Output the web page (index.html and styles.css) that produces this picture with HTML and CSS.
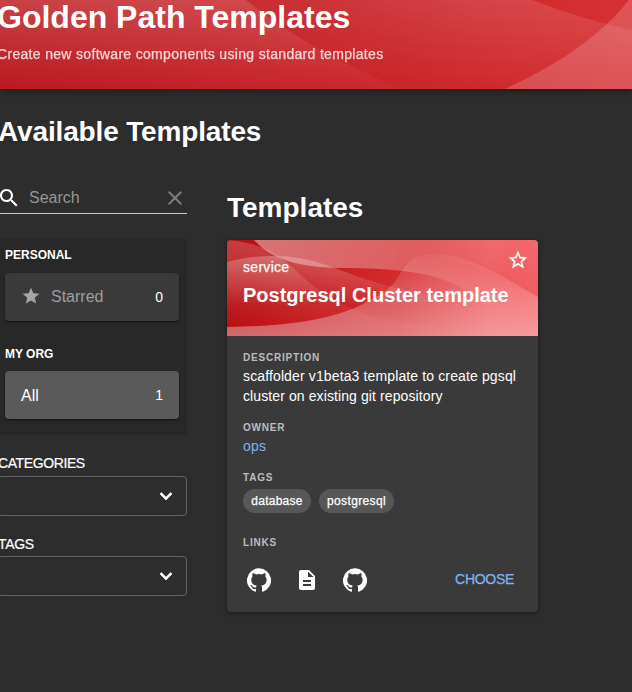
FILE: index.html
```html
<!DOCTYPE html>
<html lang="en">
<head>
<meta charset="utf-8">
<title>Golden Path Templates</title>
<link rel="stylesheet" href="styles.css">
</head>
<body>
<header class="hero">
  <svg class="art" viewBox="0 0 632 89" preserveAspectRatio="none" aria-hidden="true">
    <defs>
      <linearGradient id="h1" x1="0" y1="0" x2="0" y2="1"><stop offset="0" stop-color="#fff" stop-opacity=".19"/><stop offset="1" stop-color="#fff" stop-opacity=".02"/></linearGradient>
      <linearGradient id="h2" x1="0" y1="0" x2="0" y2="1"><stop offset="0" stop-color="#fff" stop-opacity=".13"/><stop offset="1" stop-color="#fff" stop-opacity="0"/></linearGradient>
      <linearGradient id="h3" x1="0" y1="0" x2="1" y2="0"><stop offset="0" stop-color="#fff" stop-opacity=".5"/><stop offset=".6" stop-color="#fff"/></linearGradient>
      <mask id="m1"><rect x="240" width="392" height="89" fill="url(#h3)"/></mask>
    </defs>
    <path fill="url(#h1)" d="M0 0H246C275 24 334 62 403 89H0Z"/>
    <path fill="url(#h2)" mask="url(#m1)" d="M246 0H532Q580 19 632 30V89H403C334 62 275 24 246 0Z"/>
    <path fill="#fff" fill-opacity=".17" d="M629 0Q590 50 505 89H632V0Z"/>
  </svg>
  <h1>Golden Path Templates</h1>
  <p>Create new software components using standard templates</p>
</header>
<main>
  <h2 class="page-title">Available Templates</h2>
  <div class="columns">
    <aside>
      <div class="search">
        <svg class="icon lens" viewBox="0 0 24 24"><path d="M15.5 14h-.79l-.28-.27C15.41 12.59 16 11.11 16 9.5 16 5.91 13.09 3 9.5 3S3 5.91 3 9.5 5.91 16 9.5 16c1.61 0 3.09-.59 4.23-1.57l.27.28v.79l5 4.99L20.49 19l-4.99-5zm-6 0C7.01 14 5 11.99 5 9.5S7.01 5 9.5 5 14 7.01 14 9.5 11.99 14 9.5 14z"/></svg>
        <span class="placeholder">Search</span>
        <svg class="icon clear" viewBox="0 0 24 24"><path d="M19 6.41L17.59 5 12 10.59 6.41 5 5 6.41 10.59 12 5 17.59 6.41 19 12 13.41 17.59 19 19 17.59 13.41 12z"/></svg>
      </div>
      <section class="picker">
        <h3><span class="personal">PERSONAL</span></h3>
        <div class="choice off">
          <svg class="star" viewBox="0 0 24 24"><path d="M12 17.27L18.18 21l-1.64-7.03L22 9.24l-7.19-.61L12 2 9.19 8.63 2 9.24l5.46 4.73L5.82 21z"/></svg>
          <span class="starred">Starred</span><span class="count">0</span>
        </div>
        <h3 class="org"><span>MY ORG</span></h3>
        <div class="choice on"><span class="all">All</span><span class="count">1</span></div>
      </section>
      <div class="filter"><label class="cat">CATEGORIES</label>
        <div class="select"><svg class="icon" viewBox="0 0 24 24"><path d="M7.41 8.59L12 13.17l4.59-4.58L18 10l-6 6-6-6z"/></svg></div></div>
      <div class="filter second"><label class="tag-label">TAGS</label>
        <div class="select"><svg class="icon" viewBox="0 0 24 24"><path d="M7.41 8.59L12 13.17l4.59-4.58L18 10l-6 6-6-6z"/></svg></div></div>
    </aside>
    <section class="results">
      <h2>Templates</h2>
      <article class="card">
        <div class="card-head">
          <svg class="art" viewBox="0 0 311 96" preserveAspectRatio="none" aria-hidden="true">
            <defs>
              <linearGradient id="c1" gradientUnits="userSpaceOnUse" x1="60" y1="14" x2="60" y2="80"><stop offset="0" stop-color="#fff" stop-opacity=".26"/><stop offset=".8" stop-color="#fff" stop-opacity="0"/></linearGradient>
              <linearGradient id="c2" x1="0" y1="0" x2="0" y2="1"><stop offset="0" stop-color="#fff" stop-opacity=".2"/><stop offset="1" stop-color="#fff" stop-opacity="0"/></linearGradient>
              <linearGradient id="c3" gradientUnits="userSpaceOnUse" x1="195" y1="10" x2="195" y2="96"><stop offset="0" stop-color="#fff" stop-opacity=".03"/><stop offset="1" stop-color="#fff" stop-opacity=".38"/></linearGradient>
              <linearGradient id="c4" gradientUnits="userSpaceOnUse" x1="27" y1="0" x2="270" y2="60"><stop offset="0" stop-color="#fff" stop-opacity=".42"/><stop offset=".55" stop-color="#fff" stop-opacity=".26"/><stop offset="1" stop-color="#fff" stop-opacity="0"/></linearGradient>
              <linearGradient id="c5" x1="0" y1="0" x2="0" y2="1"><stop offset="0" stop-color="#fff" stop-opacity=".14"/><stop offset="1" stop-color="#fff" stop-opacity="0"/></linearGradient>
            </defs>
            <path fill="url(#c2)" d="M0 0C55 4 64 32 95 52C130 76 165 88 311 93V96H0Z"/>
            <path fill="url(#c1)" d="M0 22C35 13 70 14 102 26C142 41 180 55 235 58L311 70V96H0Z"/>
            <path fill="url(#c4)" d="M27 0C45 20 73 27 110 28C150 28 195 29 230 45Q252 58 275 76L311 96V0Z"/>
            <path fill="url(#c5)" d="M200 0H311V57C280 39 258 29 240 24L200 20Z" class="corner-glow"/>
            <path fill="url(#c3)" d="M0 87C70 86 110 78 140 62C157 53 164 48 171 37C183 18 188 13 213 14C243 16 276 37 311 57V96H0Z"/>
          </svg>
          <span class="kind">service</span>
          <h3>Postgresql Cluster template</h3>
          <svg class="favorite" viewBox="0 0 24 24"><path d="M22 9.24l-7.19-.62L12 2 9.19 8.63 2 9.24l5.46 4.73L5.82 21 12 17.27 18.18 21l-1.63-7.03L22 9.24zM12 15.4l-3.76 2.27 1-4.28-3.32-2.88 4.38-.38L12 6.1l1.71 4.04 4.38.38-3.32 2.88 1 4.28L12 15.4z"/></svg>
        </div>
        <div class="card-body">
          <h4 class="l-desc">DESCRIPTION</h4>
          <p><span class="line1">scaffolder v1beta3 template to create pgsql</span><br><span class="line2">cluster on existing git repository</span></p>
          <h4 class="owner">OWNER</h4>
          <a class="ops">ops</a>
          <h4 class="tags">TAGS</h4>
          <div class="chips"><span class="chip db">database</span><span class="chip pg">postgresql</span></div>
          <h4 class="links">LINKS</h4>
          <div class="actions">
            <svg class="icon" viewBox="0 0 24 24"><path d="M12 .3a12 12 0 0 0-3.8 23.4c.6.1.8-.3.8-.6v-2c-3.3.7-4-1.6-4-1.6-.6-1.4-1.4-1.8-1.4-1.8-1-.7.1-.7.1-.7 1.2 0 1.9 1.2 1.9 1.2 1 1.8 2.8 1.3 3.5 1 0-.8.4-1.3.7-1.6-2.7-.3-5.5-1.3-5.5-6 0-1.2.5-2.3 1.3-3.1-.2-.4-.6-1.6 0-3.2 0 0 1-.3 3.4 1.2a11.5 11.5 0 0 1 6 0c2.3-1.5 3.3-1.2 3.3-1.2.6 1.6.2 2.8 0 3.2.9.8 1.3 1.9 1.3 3.2 0 4.6-2.8 5.6-5.5 5.9.5.4.9 1 .9 2.2v3.3c0 .3.1.7.8.6A12 12 0 0 0 12 .3"/></svg>
            <svg class="icon" viewBox="0 0 24 24"><path d="M14 2H6c-1.1 0-1.99.9-1.99 2L4 20c0 1.1.89 2 1.99 2H18c1.1 0 2-.9 2-2V8l-6-6zm2 16H8v-2h8v2zm0-4H8v-2h8v2zm-3-5V3.5L18.5 9H13z"/></svg>
            <svg class="icon" viewBox="0 0 24 24"><path d="M12 .3a12 12 0 0 0-3.8 23.4c.6.1.8-.3.8-.6v-2c-3.3.7-4-1.6-4-1.6-.6-1.4-1.4-1.8-1.4-1.8-1-.7.1-.7.1-.7 1.2 0 1.9 1.2 1.9 1.2 1 1.8 2.8 1.3 3.5 1 0-.8.4-1.3.7-1.6-2.7-.3-5.5-1.3-5.5-6 0-1.2.5-2.3 1.3-3.1-.2-.4-.6-1.6 0-3.2 0 0 1-.3 3.4 1.2a11.5 11.5 0 0 1 6 0c2.3-1.5 3.3-1.2 3.3-1.2.6 1.6.2 2.8 0 3.2.9.8 1.3 1.9 1.3 3.2 0 4.6-2.8 5.6-5.5 5.9.5.4.9 1 .9 2.2v3.3c0 .3.1.7.8.6A12 12 0 0 0 12 .3"/></svg>
            <a class="choose">CHOOSE</a>
          </div>
        </div>
      </article>
    </section>
  </div>
</main>
</body>
</html>
```
FILE: styles.css
```css
* { box-sizing: border-box; }
body { margin: 0; height: 692px; overflow: hidden; background: #2d2d2d; color: #fff; font-family: "Liberation Sans", Arial, sans-serif; font-size: 14px; }
h1, h2, h3, h4, p { margin: 0; white-space: nowrap; }
svg { display: block; flex: none; }
.icon { width: 24px; height: 24px; fill: #fff; }
.art { position: absolute; inset: 0; width: 100%; height: 100%; z-index: -1; }
.corner-glow { opacity: .6; mask-image: linear-gradient(90deg, transparent, #000 60%); }

.hero { position: relative; z-index: 0; height: 89px; background: linear-gradient(90deg, #b9151a, #cb2529 65%, #d83133); box-shadow: 0 2px 8px rgba(0,0,0,.4); }
.hero h1 { height: 35px; margin-left: -3px; font-size: 32px; line-height: 34px; }
.hero p { margin: 9px 0 0 -3px; line-height: 20px; letter-spacing: .32px; opacity: .8; -webkit-text-stroke: .25px #fff; }

.page-title { height: 42px; margin: 22px 0 32px -2px; font-size: 28px; line-height: 42px; letter-spacing: -.15px; }
.columns { display: flex; gap: 40px; }
aside { width: 190px; margin-left: -3px; }
.search { display: flex; align-items: center; height: 29px; border-bottom: 1px solid #c9c9c9; }
.lens { margin: -3px 0 0; }
.placeholder { margin: -2px 0 0 8px; font-size: 16px; color: #969696; }
.clear { margin: -3px 0 0 auto; fill: #7d7d7d; }

.picker { height: 197px; margin-top: 24px; padding: 8px 8px 0; border-radius: 4px; background: #282828; }
.picker h3 { height: 27px; font-size: 12px; line-height: 18px; }
.picker .org { height: 26px; margin-top: 24px; }
.choice { display: flex; align-items: center; height: 48px; padding: 0 16px; border-radius: 4px; background: #3a3a3a; font-size: 16px; box-shadow: 0 1px 2px rgba(0,0,0,.6); }
.off { color: #9e9e9e; }
.on { background: #5a5a5a; }
.all { margin-top: 2px; }
.star { width: 20px; height: 20px; margin: -2px 10px 0 0; fill: #a5a5a5; }
.count { margin-left: auto; color: #fff; font-size: 14px; }
.filter { margin-top: 18px; }
.filter label { display: block; height: 23px; line-height: 20px; -webkit-text-stroke: .2px #fff; }
.cat { margin-left: 1px; letter-spacing: -.4px; }
.tag-label { margin-left: 1px; letter-spacing: -.3px; }
.select { display: flex; align-items: center; justify-content: flex-end; height: 40px; padding-right: 8px; border: 1px solid #626262; border-radius: 4px; }
.select .icon { stroke: #fff; stroke-width: .7; }
.second { margin-top: 18px; }
.second label { height: 22px; }

.results { width: 311px; padding-top: 6px; }
.results h2 { height: 49px; font-size: 28px; line-height: 34px; }
.card { height: 372px; border-radius: 4px; background: #3a3a3a; box-shadow: 0 1px 4px rgba(0,0,0,.5); overflow: hidden; }
.card-head { position: relative; z-index: 0; height: 96px; padding: 17px 16px; background: linear-gradient(90deg, #b60b0f, #d42b2e 55%, #ee575b 85%, #f25c60); }
.kind { display: block; line-height: 20px; letter-spacing: .3px; -webkit-text-stroke: .25px #fff; }
.card-head h3 { margin-top: 6px; font-size: 20px; line-height: 24px; }
.favorite { position: absolute; top: 9px; right: 9px; width: 22px; height: 22px; fill: #fff; stroke: #fff; stroke-width: .3; }
.card-body { padding: 14px 16px 0; }
h4 { height: 16px; font-size: 10px; line-height: 15px; letter-spacing: .8px; color: #bdbdbd; }
.card-body p { height: 40px; line-height: 20px; }
.line1 { letter-spacing: .13px; }
.line2 { letter-spacing: .1px; }
.owner { margin-top: 14px; }
.ops { display: block; height: 20px; line-height: 20px; letter-spacing: .2px; color: #82b1f2; }
.tags { margin-top: 14px; height: 19px; }
.chips { display: flex; gap: 8px; }
.chip { width: 68px; height: 24px; border-radius: 12px; background: #575757; font-size: 12px; line-height: 24px; letter-spacing: .25px; text-align: center; white-space: nowrap; -webkit-text-stroke: .25px #fff; }
.pg { width: 75px; letter-spacing: .36px; }
.links { height: 17px; margin-top: 22px; }
.actions { display: flex; align-items: center; gap: 24px; height: 48px; margin-top: 4px; padding: 0 8px 0 4px; }
.choose { margin: -2px 0 0 auto; letter-spacing: -.3px; color: #82b1f2; -webkit-text-stroke: .25px #82b1f2; }
```
